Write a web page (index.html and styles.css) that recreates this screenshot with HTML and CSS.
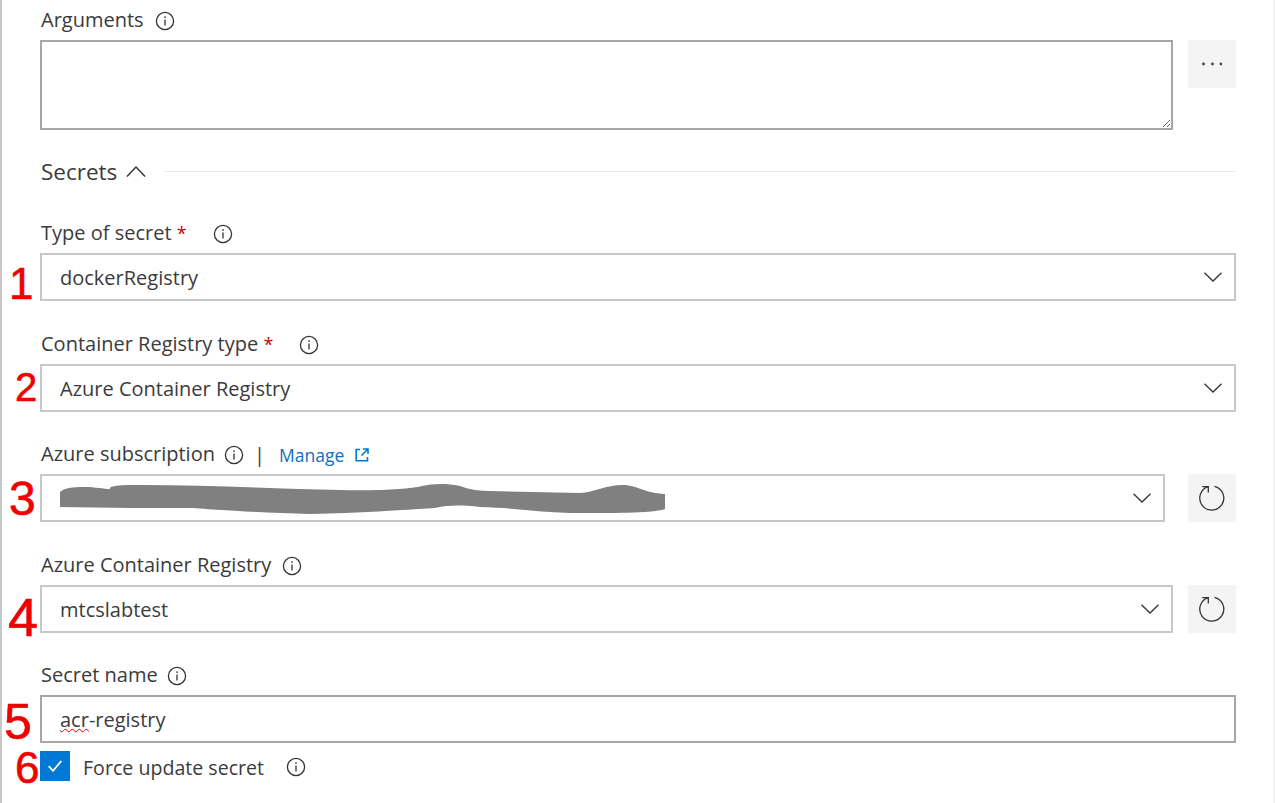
FILE: index.html
```html
<!DOCTYPE html>
<html lang="en">
<head>
    <meta charset="UTF-8">
    <meta name="viewport" content="width=device-width, initial-scale=1.0">
    <title>Secrets</title>
    <link rel="stylesheet" href="styles.css">
</head>
<body>
    <form class="panel">
        <div class="form-group first">
            <div class="field-label">
                <span>Arguments</span>
                <svg class="info" viewBox="0 0 20 20"><circle cx="10" cy="10" r="8.6"/><path d="M10 8.6v6M10 5.2v1.7"/></svg>
            </div>
            <div class="control-row wide-gap">
                <textarea class="text-area" spellcheck="false"></textarea>
                <button type="button" class="side-button">
                    <svg class="dots" viewBox="0 0 20 4"><circle cx="1.500" cy="2" r="1.400"/><circle cx="10.500" cy="2" r="1.400"/><circle cx="19" cy="2" r="1.400"/></svg>
                </button>
            </div>
        </div>

        <div class="section-head">
            <span class="section-title">Secrets</span>
            <svg class="section-chevron" viewBox="0 0 20 11"><path d="M1 10.500 10 1l9 9.500"/></svg>
            <div class="section-line"></div>
        </div>

        <div class="form-group">
            <div class="field-label">
                <span>Type of secret <span class="star">*</span></span>
                <svg class="info info-far" viewBox="0 0 20 20"><circle cx="10" cy="10" r="8.6"/><path d="M10 8.6v6M10 5.2v1.7"/></svg>
            </div>
            <div class="select-box"><span>dockerRegistry</span><svg class="chevron" viewBox="0 0 18 10"><path d="M.5.8 9 9 17.500.8"/></svg></div>
        </div>

        <div class="form-group">
            <div class="field-label">
                <span>Container Registry type <span class="star">*</span></span>
                <svg class="info info-far" viewBox="0 0 20 20"><circle cx="10" cy="10" r="8.6"/><path d="M10 8.6v6M10 5.2v1.7"/></svg>
            </div>
            <div class="select-box"><span>Azure Container Registry</span><svg class="chevron" viewBox="0 0 18 10"><path d="M.5.8 9 9 17.500.8"/></svg></div>
        </div>

        <div class="form-group">
            <div class="field-label">
                <span>Azure subscription</span>
                <svg class="info info-near" viewBox="0 0 20 20"><circle cx="10" cy="10" r="8.6"/><path d="M10 8.6v6M10 5.2v1.7"/></svg>
                <span class="pipe">|</span>
                <a class="manage-link">Manage</a>
                <svg class="external" viewBox="0 0 14 14"><path d="M5 1.500H1.200v11.300h11.300V9M8 1h5v5M13 1 6.500 7.500"/></svg>
            </div>
            <div class="control-row">
                <div class="select-box narrow">
                    <svg class="redaction" viewBox="0 0 605 30"><path d="M0 8C4 4 12 3 24 3 36 3 44 5 50 5 50 2 54 1 80 1 150 1 220 5 280 6 320 7 350 5 362 2 372 0 385-1 400 2 410 6 420 7 430 7L520 9C535 8 548 0 565 1 578 2 585 9 605 10V25C595 29 560 29 520 29 480 29 460 24 420 23 400 21 390 21 375 24 340 26 300 29 250 30 200 29 150 25 130 24L70 24 0 23Z"/></svg>
                    <svg class="chevron" viewBox="0 0 18 10"><path d="M.5.8 9 9 17.500.8"/></svg>
                </div>
                <button type="button" class="side-button">
                    <svg class="refresh" viewBox="0 0 26 26"><path d="M15.500 1.400A12 12 0 1 1 9.300 1.600M3.300 1.600h6v6"/></svg>
                </button>
            </div>
        </div>

        <div class="form-group">
            <div class="field-label">
                <span>Azure Container Registry</span>
                <svg class="info" viewBox="0 0 20 20"><circle cx="10" cy="10" r="8.6"/><path d="M10 8.6v6M10 5.2v1.7"/></svg>
            </div>
            <div class="control-row wide-gap">
                <div class="select-box"><span>mtcslabtest</span><svg class="chevron" viewBox="0 0 18 10"><path d="M.5.8 9 9 17.500.8"/></svg></div>
                <button type="button" class="side-button">
                    <svg class="refresh" viewBox="0 0 26 26"><path d="M15.500 1.400A12 12 0 1 1 9.300 1.600M3.300 1.600h6v6"/></svg>
                </button>
            </div>
        </div>

        <div class="form-group last">
            <div class="field-label">
                <span>Secret name</span>
                <svg class="info info-near" viewBox="0 0 20 20"><circle cx="10" cy="10" r="8.6"/><path d="M10 8.6v6M10 5.2v1.7"/></svg>
            </div>
            <div class="select-box dark"><span><span class="misspelt">acr</span>-registry</span></div>
        </div>

        <div class="check-row">
            <span class="check-box"><svg viewBox="0 0 14 12"><path d="M.7 6.200 5 10.800 13.300 1"/></svg></span>
            <span class="check-label">Force update secret</span>
            <svg class="info info-check" viewBox="0 0 20 20"><circle cx="10" cy="10" r="8.6"/><path d="M10 8.6v6M10 5.2v1.700"/></svg>
        </div>

        <!-- red numbers written over the screenshot -->
        <span class="mark mark-1">1</span>
        <span class="mark mark-2">2</span>
        <span class="mark mark-3">3</span>
        <span class="mark mark-4">4</span>
        <span class="mark mark-5">5</span>
        <span class="mark mark-6">6</span>
    </form>
</body>
</html>
```
FILE: styles.css
```css
html, body {
    margin: 0;
    height: 100%;
    background-color: #fff;
}
body {
    font-family: "Open Sans", "Noto Sans", sans-serif;
    font-size: 20px;
    color: #3b3b3b;
    overflow: hidden;
}
.panel {
    position: relative;
    box-sizing: border-box;
    height: 803px;
    padding: 0 37px 0 38px;
    border-left: 2px solid #c8c8c8;
    border-right: 2px solid #f4f4f4;
}
.form-group {
    margin-bottom: 32.5px;
}
.form-group.first {
    margin: 0;
    padding-top: 10px;
}
.form-group.last {
    margin-bottom: 8px;
}
.field-label {
    display: flex;
    align-items: center;
    height: 22px;
    margin-bottom: 8px;
    line-height: 20px;
}
.field-label > span:first-child {
    position: relative;
    top: -1px;
    left: 1px;
}
.star {
    color: #c00;
    font-size: 18px;
}
.info {
    flex: none;
    width: 20px;
    height: 20px;
    margin-left: 12px;
    fill: none;
    stroke: #333;
    stroke-width: 1.3;
}
.info-far {
    margin-left: 27px;
}
.info-near {
    margin-left: 10px;
}
.info-check {
    margin: 1px 0 0 22px;
}
.pipe {
    margin: 0 13px 0 10px;
}
.manage-link {
    margin-left: 1px;
    font-size: 17.500px;
    color: #106ebe;
}
.external {
    width: 14px;
    height: 14px;
    margin-left: 11px;
    fill: none;
    stroke: #0078d4;
    stroke-width: 1.600;
}
.control-row {
    display: flex;
    gap: 23px;
}
.control-row.wide-gap {
    gap: 15px;
}
.text-area {
    flex: 1;
    display: block;
    box-sizing: border-box;
    height: 90px;
    border: 2px solid #a6a6a6;
    border-radius: 0;
    outline: none;
}
.side-button {
    flex: none;
    display: flex;
    align-items: center;
    justify-content: center;
    width: 48px;
    height: 48px;
    padding: 0;
    border: none;
    background-color: #f4f4f4;
}
.dots {
    width: 20px;
    height: 4px;
    fill: #444;
}
.refresh {
    width: 26px;
    height: 26px;
    fill: none;
    stroke: #333;
    stroke-width: 1.300;
}
.section-head {
    display: flex;
    align-items: center;
    height: 32px;
    margin: 26px 0 35px;
}
.section-title {
    position: relative;
    top: -1px;
    left: 1px;
    font-size: 22.500px;
}
.section-chevron {
    width: 20px;
    height: 11px;
    margin: -2px 0 0 10px;
    fill: none;
    stroke: #333;
    stroke-width: 1.400;
}
.section-line {
    flex: 1;
    height: 1px;
    margin: -2px 0 0 19px;
    background-color: #eaeaea;
}
.select-box {
    flex: 1;
    display: flex;
    align-items: center;
    justify-content: space-between;
    box-sizing: border-box;
    height: 48px;
    padding: 1px 12px 0 18px;
    border: 2px solid #c8c8c8;
}
.select-box.dark {
    border-color: #a6a6a6;
}
.chevron {
    width: 18px;
    height: 10px;
    margin-top: -1px;
    fill: none;
    stroke: #333;
    stroke-width: 1.300;
}
.select-box.narrow {
    position: relative;
}
.redaction {
    position: absolute;
    left: 18px;
    top: 8px;
    width: 605px;
    height: 30px;
    overflow: visible;
    fill: #808080;
}
.select-box.narrow .chevron {
    margin-left: auto;
}
.misspelt {
    text-decoration: underline wavy #e00000 1px;
}
.check-row {
    display: flex;
    align-items: center;
    height: 30px;
}
.check-box {
    display: flex;
    align-items: center;
    justify-content: center;
    width: 30px;
    height: 30px;
    margin-right: 13px;
    background-color: #0078d4;
}
.check-box svg {
    width: 14px;
    height: 12px;
    fill: none;
    stroke: #fff;
    stroke-width: 1.800;
}
.check-label {
    position: relative;
    top: 1px;
    font-size: 19.600px;
}
.mark {
    position: absolute;
    color: #f00000;
    font-family: "Liberation Sans", sans-serif;
    font-size: 44px;
    line-height: 44px;
    -webkit-text-stroke: .6px #f00000;
}
.mark-1 { left: 7px; top: 262px; }
.mark-2 { left: 13px; top: 365px; font-size: 40px; }
.mark-3 { left: 7px; top: 477px; font-size: 48px; }
.mark-4 { left: 6px; top: 595px; font-size: 54px; }
.mark-5 { left: 2px; top: 700px; font-size: 50px; }
.mark-6 { left: 13px; top: 746px; }
```
